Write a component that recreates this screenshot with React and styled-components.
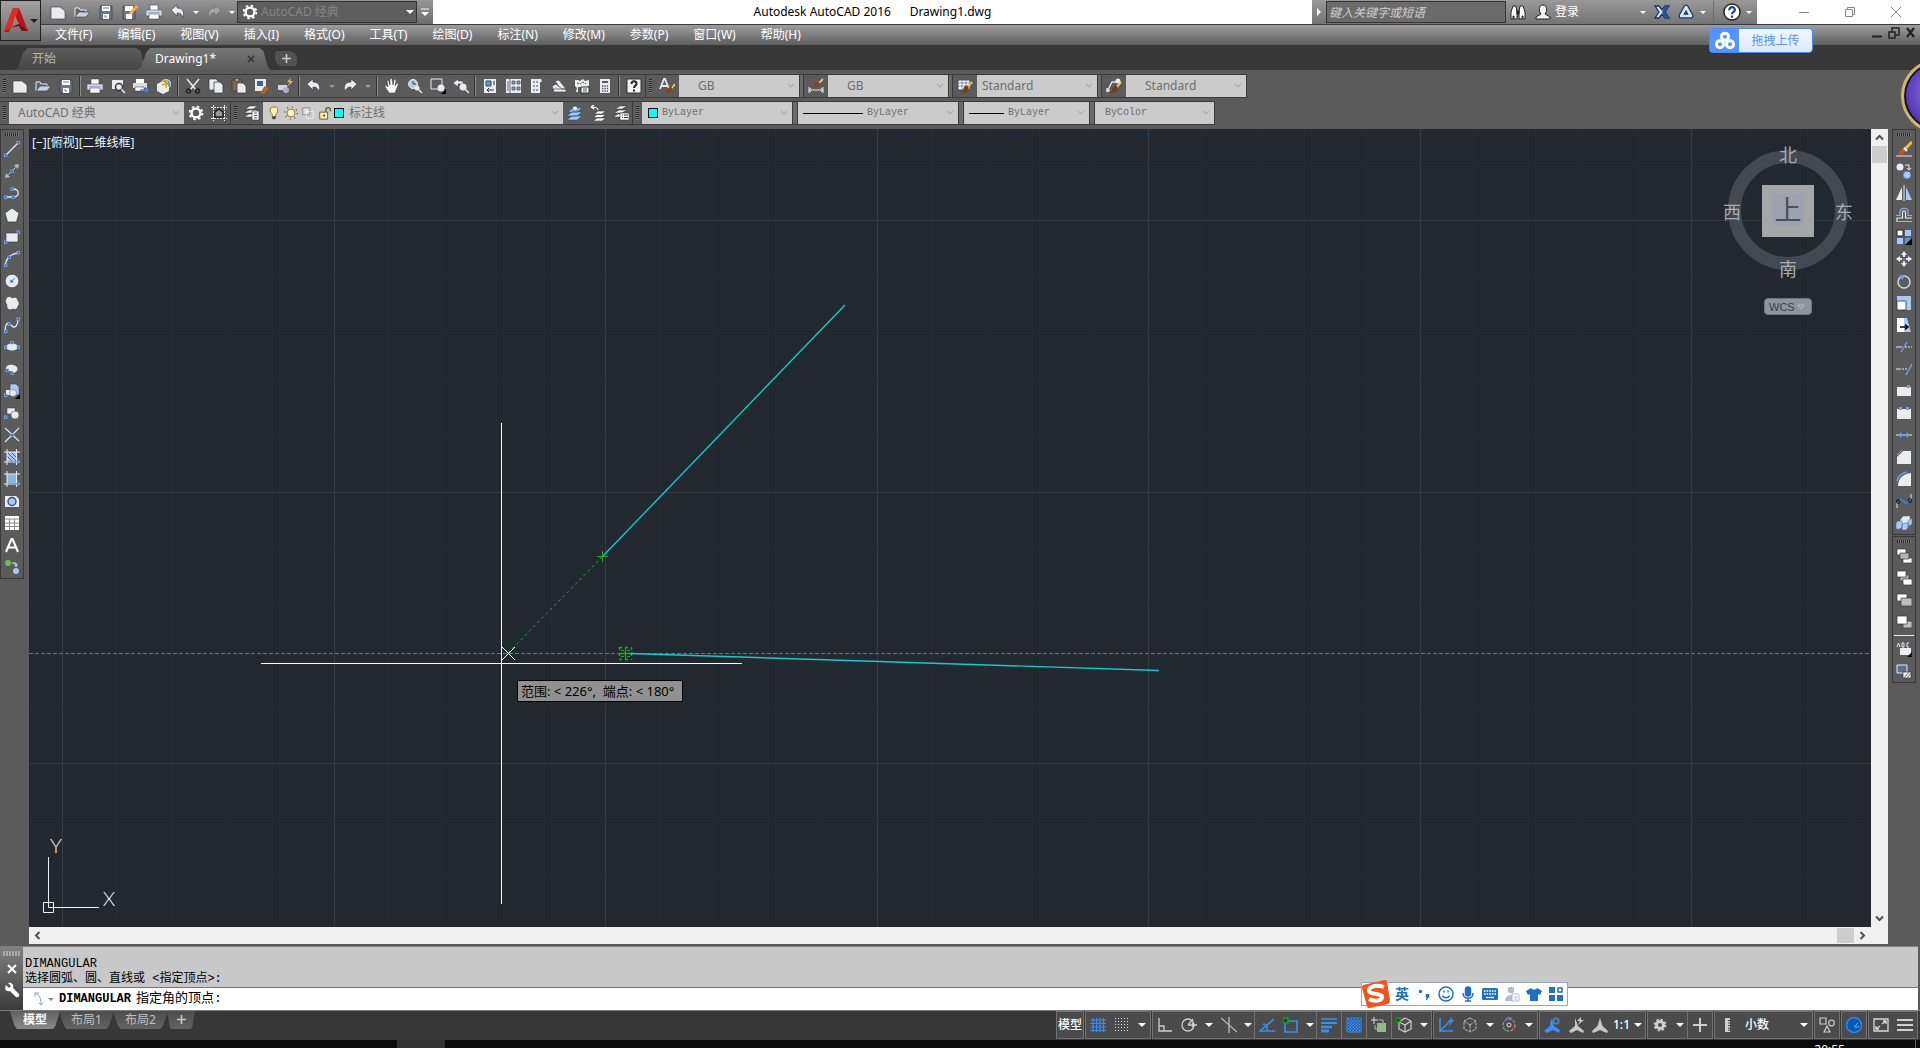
import React, { useState } from "react";
import styled, { createGlobalStyle, css } from "styled-components";

const GlobalStyle = createGlobalStyle`
  * {
    box-sizing: border-box;
  }
  body {
    margin: 0;
    background: #5b5b5b;
    font-family: "Noto Sans", "Noto Sans CJK SC", sans-serif;
    font-size: 12px;
    line-height: 16px;
  }
  button, input, select {
    font: inherit;
    color: inherit;
    margin: 0;
    padding: 0;
    border: none;
    background: none;
    outline: none;
  }
`;

/* ---------- icons ---------- */

const L = "#e9ebef";
const B = "#a9c8f5";
const D = "#333";

const sheet = <path d="M1 3h9l5 4v8H1z" fill={L} stroke={D} strokeWidth=".6" />;
const node = (x, y) => (
  <rect key={`${x}-${y}`} x={x - 1} y={y - 1} width="2.4" height="2.4" fill="#2c4a80" stroke="#7fb0f5" strokeWidth=".9" />
);
const brush = (
  <g>
    <path d="M15 4l-5 6" stroke="#f3c05a" strokeWidth="2" />
    <path d="M11 8c-3-1-5 1-5 5-1 1-2 1-3 1 3 2 8 1 9-3z" fill="#7a3e14" />
  </g>
);

const ICONS = {
  new: sheet,
  open: (
    <g stroke={D} strokeWidth=".6">
      <path d="M1 13V4h4l1 2h6v3" fill="#5d6570" stroke={L} strokeWidth="1" />
      <path d="M1 13l4-5h11l-4 5z" fill="#c6d2e2" />
    </g>
  ),
  save: (
    <g>
      <path d="M2 2h12v13H2z" fill="#6c7686" stroke={D} strokeWidth=".6" />
      <path d="M4 2h8v5H4zM5 10h6v5H5z" fill="#fff" />
      <path d="M5 4h6M6 12h2v2" stroke="#6c7686" fill="none" />
    </g>
  ),
  saveAs: (
    <g>
      <path d="M1 2h12v13H1z" fill="#6c7686" stroke={D} strokeWidth=".6" />
      <path d="M3 2h8v5H3zM4 10h6v5H4z" fill="#fff" />
      <path d="M15 2L8 10" stroke="#f0b040" strokeWidth="3" />
      <path d="M9 8l-2 4 3-2z" fill="#f7dca0" />
    </g>
  ),
  print: (
    <g stroke={D} strokeWidth=".5">
      <path d="M4 1h8v6H4z" fill="#fff" />
      <path d="M0 6h16v6H0z" fill="#d9dce2" />
      <path d="M2 8.500h12" stroke="#4d88d6" />
      <path d="M3 10h10v5H3z" fill="#fff" />
    </g>
  ),
  undo: <path d="M1 6l6-5v3c5 0 8 3 6 10-1-4-3-5-6-5v3z" fill={L} stroke={D} strokeWidth=".6" />,
  redo: <path d="M15 6L9 1v3C4 4 1 7 3 14c1-4 3-5 6-5v3z" fill={L} stroke={D} strokeWidth=".6" />,
  redoDim: <path d="M15 6L9 1v3C4 4 1 7 3 14c1-4 3-5 6-5v3z" fill="#a4a4a4" stroke="#666" strokeWidth=".6" />,
  gear: (
    <g fill="none" stroke="#fff">
      <circle cx="8" cy="8" r="4.400" strokeWidth="2.400" />
      <circle cx="8" cy="8" r="6.400" strokeWidth="1.800" strokeDasharray="2.500 2.526" />
    </g>
  ),
  gearDim: (
    <g fill="none" stroke="#cfcfcf">
      <circle cx="8" cy="8" r="3.500" strokeWidth="3" />
      <circle cx="8" cy="8" r="5.500" strokeWidth="1.800" strokeDasharray="2.200 2.120" />
    </g>
  ),
  preview: (
    <g>
      <path d="M2 2h11v9H2z" fill={L} />
      <circle cx="9" cy="9" r="3.500" fill="#eee" stroke={D} strokeWidth="1.400" />
      <path d="M11.500 11.500L15 15" stroke={L} strokeWidth="1.600" />
    </g>
  ),
  publish: (
    <g>
      <path d="M3 1h8v4H3z" fill="#fff" />
      <path d="M0 5h14v5H0z" fill="#d9dce2" />
      <path d="M2 9h9v4H2z" fill="#fff" stroke={D} strokeWidth=".5" />
      <path d="M7 12h7M12 9.500l3 2.500-3 2.500" stroke="#4a80e0" strokeWidth="1.500" fill="none" />
    </g>
  ),
  globe: (
    <g>
      <path d="M1 6l6-3 6 3v7l-6 3-6-3z" fill={L} />
      <circle cx="10" cy="6" r="5" fill="#f4f0d0" />
      <path d="M7 4c2-3 4-2 5-1M6 7c3-2 5 0 4 3" stroke="#e39b2a" strokeWidth="1.600" fill="none" />
      <path d="M9 3c1 3 4 3 5 6" stroke="#47a55a" strokeWidth="1.500" fill="none" />
      <path d="M12 3l2 4" stroke="#4a80d0" strokeWidth="1.500" />
    </g>
  ),
  cut: (
    <g stroke={L} fill="none" strokeWidth="1.500">
      <path d="M2 1l9 11M14 1L5 12" />
      <circle cx="3.500" cy="13" r="2" stroke="#222" />
      <circle cx="12.500" cy="13" r="2" stroke="#222" />
    </g>
  ),
  copy: (
    <g stroke={D} strokeWidth=".7" fill={L}>
      <path d="M1 1h7l2 2v9H1z" />
      <path d="M6 4h6l3 3v8H6z" />
    </g>
  ),
  paste: (
    <g stroke={D} strokeWidth=".7">
      <path d="M1 2h10v11H1z" fill="#80684c" />
      <path d="M4 1h4v2H4z" fill="#ddd" />
      <path d="M6 5h6l3 3v7H6z" fill={L} />
    </g>
  ),
  match: (
    <g>
      <path d="M1 1h11v12H1z" fill={L} />
      <path d="M3 3h6v5H3z" fill="#3465a8" />
      <path d="M11 8l4 2-5 6-5-1c3-1 3-4 6-7z" fill="#b8621e" />
    </g>
  ),
  blockEdit: (
    <g>
      <path d="M1 7h9v5H1z" fill="#cfd6e2" />
      <circle cx="9" cy="12" r="3" fill="#a9b2c2" />
      <path d="M14 0l-4 4h3l-3 5 6-6h-3z" fill="#ffc23a" />
    </g>
  ),
  hand: (
    <path
      d="M5 15c-1-3-4-5-4-7 1-1 2 0 3 1L3 3c1-1 2 0 2 1l1 3V1c1-1 2-1 2 0l1 6 1-5c1-1 2 0 2 1l-1 5 2-3c1 0 2 1 1 2l-3 8z"
      fill="#fff"
      stroke={D}
      strokeWidth=".5"
    />
  ),
  zoomTime: (
    <g>
      <circle cx="6" cy="6" r="4.500" fill="#b9c7d8" stroke={L} />
      <path d="M6 3v3h3" stroke="#2d4a78" fill="none" />
      <circle cx="10" cy="10" r="2.500" fill={L} />
      <path d="M11 11l4 4" stroke={L} strokeWidth="1.500" />
    </g>
  ),
  zoomWin: (
    <g>
      <path d="M1 1h11v10H1z" fill="none" stroke={L} />
      <circle cx="11" cy="10" r="3.500" fill={L} />
      <path d="M16 11v5h-5z" fill="#000" />
    </g>
  ),
  zoomPrev: (
    <g>
      <path d="M0 5l5-4v2h5v3H5v3z" fill={L} stroke={D} strokeWidth=".5" />
      <circle cx="10" cy="9" r="3.500" fill={L} />
      <path d="M12 11l4 4" stroke={L} strokeWidth="1.500" />
    </g>
  ),
  props: (
    <g>
      <path d="M2 1h12v14H2z" fill={L} />
      <path d="M4 3h5v5H4z" fill="#6a93cf" stroke="#2d4a78" />
      <path d="M11 4h2M11 6h2M5 12h7M5 12l2-2M5 12l2 2" stroke={D} fill="none" />
    </g>
  ),
  center: (
    <g>
      <path d="M1 1h15v14H1z" fill={L} />
      <path d="M5 1v14M3 3v10" stroke="#667" />
      <path d="M7 3h3v3H7zM12 3h3v3h-3zM7 9h3v3H7zM12 9h3v3h-3z" fill="#8aa0bd" stroke="#445" strokeWidth=".7" />
    </g>
  ),
  palettes: (
    <g>
      <path d="M3 1h10l1 3h-2v11H3z" fill={L} />
      <path d="M5 3h2v2H5zM8 3h2v2H8zM5 7h2v2H5zM8 7h2v2H8zM5 11h2v2H5zM8 11h2v2H8z" fill="#99a" />
    </g>
  ),
  sheets: (
    <g fill={L} stroke={D} strokeWidth=".6">
      <path d="M4 3l4-1 7 9-4 2z" />
      <path d="M1 8l4-2 6 5h4v3H3z" />
      <path d="M2 11h12" />
    </g>
  ),
  markup: (
    <g>
      <path d="M1 2h3l2 1 3-2 2 2 4-1v6l-3 1H4v5H2l1-4-2-2z" fill={L} />
      <path d="M3 5l3 1 3-2 3 2" stroke="#555" fill="none" strokeDasharray="2 1" />
      <path d="M7 9h8v6H7z" fill="#fff" stroke={D} />
      <path d="M9 11h4M9 13h4" stroke="#556" />
    </g>
  ),
  calc: (
    <g>
      <path d="M3 1h10v14H3z" fill={L} />
      <path d="M5 3h6v2H5z" fill="#556" />
      <path d="M5 8h6M5 10.500h6M5 13h6" stroke="#556" strokeWidth="1.400" strokeDasharray="1.400 1" />
    </g>
  ),
  help: (
    <g>
      <path d="M1 1h14v14H1z" fill="#f3f3f3" stroke={D} />
      <path d="M5.500 6c0-4 5.500-3.500 5 0-.5 2-2.500 1.500-2.500 4M8 11.500v2" stroke="#222" strokeWidth="2" fill="none" />
    </g>
  ),
  textStyle: (
    <g>
      <path d="M1 11L5 1h1l4 10M3 8h5" stroke={L} strokeWidth="1.800" fill="none" />
      <path d="M16 6l-4 5" stroke="#f3e05a" strokeWidth="1.500" />
      <path d="M12 9c-3 0-4 2-5 5 3 2 6 0 6-4z" fill="#8a4216" />
    </g>
  ),
  dimStyle: (
    <g>
      <path d="M1 9v6M15 9v6M1 12h14M3 10l-2 2 2 2M13 10l2 2-2 2" stroke={L} fill="none" />
      <path d="M15 1l-5 5" stroke="#f3c05a" strokeWidth="1.800" />
      <path d="M11 4c-4 0-5 3-6 6 4 1 6-1 7-4z" fill="#8a4216" />
    </g>
  ),
  tableStyle: (
    <g>
      <path d="M1 2h12v10H1z" fill="#fff" stroke="#445" />
      <path d="M1 5h12M1 8h12M5 3v9M9 3v9" stroke="#6a93cf" />
      {brush}
    </g>
  ),
  leaderStyle: (
    <g>
      <path d="M1 14L6 4h4M1 14l3-2M1 14V10" stroke={L} strokeWidth="1.300" fill="none" />
      <circle cx="12" cy="3" r="2.500" fill={L} />
      {brush}
    </g>
  ),
  wsFrame: (
    <g>
      <path d="M0 2.500h16M0 13.500h16M2.500 0v16M13.500 0v16" stroke="#eee" strokeDasharray="2 1" />
      <path d="M4 12V7l4-3 4 3v5z" fill="#9a9a9a" stroke="#1d1d1d" strokeWidth="1.400" />
    </g>
  ),
  layerProps: (
    <g fill="#fff" stroke={D} strokeWidth=".6">
      <path d="M0 12l5-3h9l-5 3zM0 8l5-3h9l-5 3zM1 4l5-3h8l-5 3z" />
      <path d="M8 6h7v9H8z" />
      <path d="M10 8h3M10 10.500h3M10 13h3" stroke="#3465a8" strokeWidth="1" />
    </g>
  ),
  layerCur: (
    <g fill="#dfe9f7" stroke="#2d4a78" strokeWidth=".6">
      <path d="M0 15l5-4h10l-5 4zM0 11l5-4h10l-5 4zM1 7l5-4h9l-5 4z" fill={B} />
      <circle cx="8" cy="3.500" r="2.500" />
    </g>
  ),
  layerPrev: (
    <g fill="#fff" stroke={D} strokeWidth=".6">
      <path d="M3 16l4-3h9l-4 3zM3 12.500l4-3h9l-4 3zM4 9l4-3h8l-4 3z" />
      <path d="M8 5c0-2-3-3-7-3M1 2l3-2M1 2l3 2" stroke="#fff" strokeWidth="1.200" fill="none" />
    </g>
  ),
  layerState: (
    <g fill="#fff" stroke={D} strokeWidth=".6">
      <path d="M0 12l5-3h9l-5 3zM1 8l5-3h8l-5 3zM2 4l5-3h7l-5 3z" />
      <path d="M7 8h9v7H7z" />
      <path d="M9 10h1M11 10h4M9 12.500h1M11 12.500h4" stroke={D} strokeWidth="1" />
    </g>
  ),
  bulb: (
    <g>
      <path d="M8 1c6 0 5 6 2 9v2H6v-2C3 7 2 1 8 1z" fill="#fff3a0" stroke="#6d6216" strokeWidth=".9" />
      <path d="M6 12h4v3H6z" fill="#445" />
    </g>
  ),
  sun: (
    <g>
      <circle cx="8" cy="8" r="7" fill="none" stroke="#6d5a20" strokeWidth="1.500" strokeDasharray="1.300 4.200" />
      <circle cx="8" cy="8" r="4.500" fill="#fff3c0" stroke="#8d6a20" />
    </g>
  ),
  freezeVp: (
    <g>
      <path d="M2 2h8v8H2z" fill="#ddd" stroke="#888" />
      <path d="M6 6h8v8H6z" fill="none" stroke="#fff" strokeDasharray="2 1" />
    </g>
  ),
  unlock: (
    <g>
      <path d="M9 7V4c0-3 5-3 5 0v2" fill="none" stroke="#5d5320" strokeWidth="1.500" />
      <path d="M2 7h9v8H2z" fill="#fff0a8" stroke="#5d5320" />
      <path d="M6 10h2v2H6z" fill="#333" />
    </g>
  ),
  binoc: (
    <g fill="#fff" stroke="#222" strokeWidth="1">
      <path d="M1 15V8l2-6h3l1 6v7H4v-3H3v3zM15 15V8l-2-6h-3L9 8v7h3v-3h1v3z" />
      <path d="M7 7h2v3H7z" fill="#222" />
    </g>
  ),
  user: (
    <g fill="#f2f2f2" stroke="#222" strokeWidth="1">
      <path d="M8 1c5 0 4 7 2 9l5 3v2H1v-2l5-3C4 8 3 1 8 1z" />
    </g>
  ),
  exchange: (
    <g>
      <path d="M1 2h4l3 4 3-4h4l-4 6 4 6h-4l-3-4-3 4H1l4-6z" fill="#dbe6fb" stroke="#1c3261" strokeWidth="1.300" />
      <path d="M11 2h4l-4 6 4 6h-4L8 8z" fill="#2d4f94" />
    </g>
  ),
  a360: (
    <g fill="none">
      <path d="M8 3l5 9H3z" stroke="#1c3261" strokeWidth="5" strokeLinejoin="round" />
      <path d="M8 3l5 9H3z" stroke="#dbe6fb" strokeWidth="2.600" strokeLinejoin="round" />
    </g>
  ),
  helpRound: (
    <g>
      <circle cx="8" cy="8" r="7.200" fill="#fff" stroke="#222" strokeWidth="1.300" />
      <path d="M5.500 6.500c0-4 5.500-3.500 5 0-.5 1.500-2.500 1.500-2.500 3.500M8 11v2" stroke="#27488c" strokeWidth="2" fill="none" />
    </g>
  ),
  cloud: (
    <g fill="none" stroke="#fff" strokeWidth="2.400">
      <circle cx="8" cy="4.500" r="2.800" />
      <circle cx="4" cy="10.500" r="2.800" />
      <circle cx="12" cy="10.500" r="2.800" />
    </g>
  ),
  wrench: (
    <path d="M2 3l3 3 2-2-3-3c4-1 6 2 5 5l6 6c1 2-1 4-3 3L6 9C2 10 0 7 2 3z" fill="#fff" />
  ),

  /* draw toolbar */
  line: <g><path d="M2 14L14 2" stroke={L} strokeWidth="1.300" />{node(1.5, 14)}{node(14, 1.5)}</g>,
  xline: (
    <g>
      <path d="M3 13L13 3" stroke={L} strokeDasharray="2 1" />
      <path d="M15 1l-5 1 4 4zM1 15l1-5 4 4z" fill="#bbb" />
      {node(8, 8)}
    </g>
  ),
  pline: <g><path d="M1 12h8c7 0 7-8 0-8" stroke={L} fill="none" strokeWidth="1.300" />{node(1.5, 12)}{node(9, 12)}{node(8, 4)}</g>,
  polygon: <path d="M8 1l7 5-2.500 9h-9L1 6z" fill={L} stroke={D} strokeWidth=".7" />,
  rect: <g><path d="M2 4h12v9H2z" fill={L} stroke={D} strokeWidth=".6" />{node(1.5, 13)}{node(14, 3)}</g>,
  arc: <g><path d="M1 15C2 8 6 3 14 2" stroke={L} fill="none" strokeWidth="1.300" />{node(1.5, 14)}{node(5, 6)}{node(14, 1.5)}</g>,
  circle: <g><circle cx="8" cy="8" r="6.800" fill={L} stroke={D} strokeWidth=".6" /><path d="M8 8l3-3" stroke="#4d88d6" />{node(7.5, 8)}</g>,
  revcloud: <path d="M2 4c1-3 5-3 6-1 3-2 6 0 6 3 2 2 1 4 0 5 0 3-3 4-5 3-3 2-7 0-6-4-2-2-2-5-1-6z" fill={L} stroke={D} strokeWidth=".6" />,
  spline: <g><path d="M1 14c1-13 6-6 7-5 3 3 6-1 6-7" stroke={L} fill="none" strokeWidth="1.300" />{node(1.5, 14)}{node(5, 7)}{node(14, 2)}</g>,
  ellipse: <g><ellipse cx="8" cy="8" rx="6" ry="3.500" fill={L} />{node(1.5, 8)}{node(14, 8)}{node(8, 3.5)}</g>,
  ellArc: <g><path d="M3 10C0 6 4 3 9 4c6 1 6 7 0 8l-1-2z" fill={L} />{node(3, 9)}{node(8, 12)}</g>,
  insert: (
    <g>
      <path d="M6 1h6l3 3v8H6z" fill={B} stroke={D} strokeWidth=".5" />
      <path d="M2 7h7v5H2z" fill={L} />
      <circle cx="9" cy="10" r="3.500" fill={L} stroke="#667" strokeWidth=".6" />
      <path d="M16 11v5h-5z" fill="#000" />
      {node(1.5, 12)}
    </g>
  ),
  block: (
    <g>
      <path d="M3 3h8v6H3z" fill={L} stroke={D} strokeWidth=".5" />
      <circle cx="11" cy="10" r="4" fill={L} stroke="#667" strokeWidth=".7" />
      {node(1.5, 12)}
    </g>
  ),
  point: <g><path d="M1 1l14 13M15 1L1 15" stroke={L} strokeWidth="1.100" />{node(8, 8)}</g>,
  hatch: (
    <g>
      <path d="M3 3h9v9H3z" fill={B} />
      <path d="M4 4l8 8M7 3l5 5M3 7l5 5" stroke="#3465a8" />
      <path d="M0 3h16M0 13h16M3 0v16M12.500 0v16" stroke={L} />
      <path d="M10 15l6-5M14 9v6" stroke="#4d88d6" />
    </g>
  ),
  gradient: (
    <g>
      <path d="M3 3h9v9H3z" fill="#8fb2e4" />
      <path d="M0 3h16M0 13h16M3 0v16M12.500 0v16" stroke={L} />
      <path d="M10 15l6-5M14 9v6" stroke="#4d88d6" />
    </g>
  ),
  region: <g><path d="M1 3h11l3 3v8H1z" fill={L} /><circle cx="8" cy="8.500" r="4" fill={B} stroke="#27488c" strokeWidth="1.300" /></g>,
  table: <g><path d="M1 1h14v14H1z" fill="#fff" /><path d="M1 4h14M1 8h14M1 11.500h14M5.500 4v11M10.500 4v11" stroke="#8a8a8a" /></g>,
  mtext: <path d="M2 15L7.500 2h1L14 15M4 10.500h8" stroke="#fff" strokeWidth="2.200" fill="none" />,
  addSel: (
    <g>
      <circle cx="4" cy="4" r="3" fill="#6cc04a" />
      <circle cx="12" cy="12" r="3" fill={B} />
      <path d="M8 4h4v3M10.500 5.500L12 7.500l1.500-2" stroke={L} fill="none" />
    </g>
  ),

  /* modify toolbar */
  erase: (
    <g>
      <path d="M0 15h16" stroke={L} />
      <path d="M16 1l-8 8" stroke="#f3b93a" strokeWidth="3" />
      <path d="M8 7l3 3" stroke="#fff" strokeWidth="2" />
      <path d="M7 8c-4 1-4 4-4 6 4 0 6-1 6-4z" fill="#c8501a" />
    </g>
  ),
  copyObj: (
    <g>
      <circle cx="4" cy="4" r="3.500" fill={L} />
      <circle cx="11" cy="12" r="3.800" fill={B} stroke="#4d72b0" strokeWidth=".6" />
      <path d="M9 2h4v4M11 5l2 2 2-2" stroke={L} fill="none" />
    </g>
  ),
  mirror: <g><path d="M6 2v13H0z" fill={L} /><path d="M10 2v13h6z" fill={B} /><path d="M8 0v16" stroke={L} /></g>,
  offset: (
    <g fill="none">
      <path d="M0 14.500h16M0 8.500h4V5c0-5 8-5 8 0v3.500h4" stroke="#8fb2e4" strokeWidth="1.200" />
      <path d="M1 14V11h5.500V6c0-3 3-3 3 0v5H16" stroke={L} strokeWidth="1.200" />
    </g>
  ),
  array: (
    <g>
      <path d="M1 1h6v6H1z" fill="#fff" stroke="#222" />
      <path d="M9 1h6v6H9zM1 9h6v6H1z" fill={B} />
      <path d="M9 9h6v6H9z" fill="#6a93cf" />
      <path d="M16 9v7H9z" fill="#000" />
    </g>
  ),
  move: (
    <g fill={L}>
      <path d="M8 0l3 4H9v2H7V4H5zM8 16l3-4H9v-2H7v2H5zM0 8l4-3v2h2v2H4v2zM16 8l-4-3v2h-2v2h2v2z" />
      <path d="M7 7h2v2H7z" fill="#4d88d6" />
    </g>
  ),
  rotate: <g><circle cx="8" cy="9" r="6" fill="none" stroke="#d5d5d5" strokeWidth="1.500" /><path d="M3 2l6 1-3 4z" fill="#6ba0f0" /></g>,
  scale: <g><path d="M1 1h14v14H1z" fill={B} /><path d="M1 6h9v9H1z" fill="#fff" stroke={D} strokeWidth=".8" /></g>,
  stretch: <g><path d="M1 1h7v14H1z" fill="#fff" /><path d="M8 1h3l4 14H8z" fill={B} /><path d="M4 10h7M9 7.500l3 2.500-3 2.500" stroke="#000" strokeWidth="1.500" fill="none" /></g>,
  trim: <g><path d="M0 8h6" stroke={L} /><path d="M9 8h7" stroke={L} strokeDasharray="2 1" /><path d="M5 13l6-10" stroke="#6ba0f0" strokeWidth="1.400" /></g>,
  extend: <g><path d="M0 8h5" stroke={L} /><path d="M6 8h5" stroke={L} strokeDasharray="2 1" /><path d="M10 14l6-11" stroke="#6ba0f0" strokeWidth="1.400" /></g>,
  breakPt: <g><path d="M1 4h14v9H1z" fill={L} /><path d="M11 2h3v3h-3z" fill="#6ba0f0" /></g>,
  breakSeg: <g><path d="M1 4h14v10H1z" fill={L} /><path d="M3 2h3v3H3zM10 2h3v3h-3z" fill="#6ba0f0" /></g>,
  join: <g><path d="M0 8h16" stroke={L} /><path d="M4 5l3 3-3 3zM12 5L9 8l3 3z" fill="#6ba0f0" /><path d="M5 8h6" stroke="#6ba0f0" strokeWidth="2" /></g>,
  chamfer: <g><path d="M7 2h8v13H1V8z" fill={L} /><path d="M1 6l5-5" stroke="#6ba0f0" /></g>,
  fillet: <g><path d="M15 2v13H2C2 8 6 3 15 2z" fill={L} /><path d="M1 10C2 5 5 2 11 1" stroke="#6ba0f0" fill="none" strokeWidth="1.600" /></g>,
  blend: (
    <g fill="none">
      <path d="M1 15V9M15 7V1" stroke={L} />
      <path d="M3 8c4-5 5 6 10 0" stroke="#3f7fd6" strokeWidth="2" />
      <circle cx="2" cy="8.500" r="1.800" stroke="#111" />
      <circle cx="14" cy="7.500" r="1.800" stroke="#111" />
    </g>
  ),
  explode: (
    <g stroke="#4d5f7d" strokeWidth=".5">
      <path d="M4 5l3-4h7v5l-3 3H4z" fill={L} />
      <path d="M0 8l2-2h4v6l-2 2H0zM6 10l2-2h4v5l-2 2H6zM12 6l4-3v6l-4 3z" fill={B} />
    </g>
  ),

  /* draw order toolbar */
  front: <g stroke={D} strokeWidth=".7"><path d="M1 1h9v6H1zM7 10h9v5H7z" fill="#fff" /><path d="M4 5h9v6H4z" fill="#b5b5b5" /></g>,
  back: <g stroke={D} strokeWidth=".7"><path d="M4 5h9v6H4z" fill="#b5b5b5" /><path d="M1 1h9v6H1zM7 9h9v6H7z" fill="#fff" /></g>,
  above: <g stroke={D} strokeWidth=".7"><path d="M1 2h10v7H1z" fill="#fff" /><path d="M5 6h11v8H5z" fill="#bdbdbd" /></g>,
  below: <g stroke={D} strokeWidth=".7"><path d="M7 7h9v7H7z" fill="#bdbdbd" /><path d="M1 2h10v8H1z" fill="#fff" /></g>,
  annoFront: (
    <g>
      <path d="M4 7h11v7H4z" fill={L} />
      <path d="M1 6l1.500-4L4 6M6 2v4h2V2zM13 2h-2v4h2" stroke={L} fill="none" />
      <path d="M16 11v5h-5z" fill="#000" />
    </g>
  ),
  hatchBack: (
    <g>
      <path d="M1 2h10v8H1z" fill="#5c6f8a" stroke={L} />
      <path d="M7 9h8v6H7z" fill={L} stroke={D} strokeWidth=".6" />
      <path d="M8 15l5-6M11 15l4-5" stroke="#777" />
    </g>
  ),

  /* status bar */
  grid: <path d="M3 1v14M6.500 1v14M10 1v14M13.500 1v14M0 3h16M0 6.500h16M0 10h16M0 13.500h16" stroke="#3b8ef3" strokeWidth="1.200" />,
  snap: (
    <g stroke="#e0e0e0" strokeDasharray="1 2">
      <path d="M1 1.500h14M1 4.500h14M1 7.500h14M1 10.500h14M1 13.500h14" />
    </g>
  ),
  ortho: <path d="M2 1v13h13M2 9h5v5" stroke="#cfcfcf" fill="none" strokeWidth="1.300" />,
  polar: <g stroke="#cfcfcf" fill="none" strokeWidth="1.300"><circle cx="7" cy="8" r="6" /><path d="M7 8h9M7 8l5-6M11 6l2 2-2 2" /></g>,
  iso: <g stroke="#bdbdbd" fill="none"><path d="M8 0v16M0 1l16 14" strokeWidth="1.300" /></g>,
  otrack: <g stroke="#3b8ef3" fill="none" strokeWidth="1.500"><path d="M15 2L1 14h15" /><path d="M4 7l4 1v5" /></g>,
  osnap: <g fill="none"><path d="M2 4h12v11H2z" stroke="#3b8ef3" strokeWidth="1.600" /><path d="M0 1h5v5H0z" fill="#143" stroke="#14a514" strokeWidth="1.500" /></g>,
  lwt: <g stroke="#3b8ef3"><path d="M0 2h16" strokeWidth="1.500" /><path d="M0 6h16" strokeWidth="2" /><path d="M0 10h11" strokeWidth="2.500" /><path d="M0 14h8" strokeWidth="3" /></g>,
  transp: (
    <g>
      <path d="M1 1h14v14H1z" fill="#20508a" stroke="#3b8ef3" />
      <path d="M2 3h12M2 6h12M2 9h12M2 12h12" stroke="#4b9bff" strokeDasharray="1.500 1.500" strokeWidth="1.500" />
      <path d="M3.500 4.500h11M3.500 7.500h11M3.500 10.500h11M3.500 13.500h11" stroke="#4b9bff" strokeDasharray="1.500 1.500" strokeWidth="1.500" />
    </g>
  ),
  cycle: <g><path d="M6 6h9v9H6z" fill="#8fbf7c" /><path d="M3 0v7M0 3h7" stroke="#ddd" /><path d="M4 8v4h2M8 3h4v3" stroke="#bbb" fill="none" /></g>,
  osnap3d: (
    <g fill="none">
      <path d="M9 1l6 3v8l-6 3-6-3V5l6-4M9 8l6-4M9 8v7M9 8L3 5" stroke="#cfcfcf" strokeWidth="1.200" />
      <path d="M0 1h4v4H0z" fill="#143" stroke="#14a514" strokeWidth="1.300" />
    </g>
  ),
  ducs: <g stroke="#3b8ef3" fill="none" strokeWidth="1.600"><path d="M2 1v13h13M2 14l9-9" /><path d="M14 0l-4 5h3l-2 4 5-6h-3z" fill="#3b8ef3" strokeWidth=".5" /></g>,
  filter: <path d="M8 1l6 3v8l-6 3-6-3V4zM8 8l6-4M8 8v7M8 8L2 4" stroke="#b9b9b9" fill="none" strokeDasharray="3 1" />,
  gizmo: (
    <g fill="none">
      <circle cx="8" cy="8" r="6" stroke="#bbb" strokeDasharray="3 1.500" />
      <circle cx="8" cy="8" r="2" stroke="#ddd" />
      <path d="M2 11l3 3" stroke="#2da32d" strokeWidth="1.500" />
      <path d="M11 11h4" stroke="#c33" strokeWidth="1.500" />
      <path d="M5 2l3-2 3 2" stroke="#5a86f0" strokeWidth="1.500" />
    </g>
  ),
  annoVis: <g><path d="M7 1l3 8 6 4-1 3-6-3-6 3-3-2 6-5z" fill="#3b8ef3" /><circle cx="12" cy="4" r="2.700" fill="#4b4b4b" stroke="#3b8ef3" strokeWidth="1.600" /></g>,
  annoAuto: <g><path d="M7 1l3 8 6 5-1 2-6-3-6 3-2-2 6-5z" fill="#c9c9c9" /><path d="M13 0l-4 4h3l-2 4 6-5h-3z" fill="#c9c9c9" /></g>,
  annoScale: <path d="M8 1l2.500 8 5.500 5-1 2-7-3-7 3-1-2 5.500-5z" fill="#c9c9c9" />,
  plus: <path d="M8 1v14M1 8h14" stroke="#cfcfcf" strokeWidth="2" />,
  ruler: <g><path d="M6 1h5v14H6z" fill="#cfcfcf" /><path d="M9 3.500h2M9 6h2M9 8.500h2M9 11h2M9 13h2" stroke="#444" /></g>,
  isolate: <g fill="none" stroke="#cfcfcf" strokeWidth="1.200"><path d="M1 1h6v6H1zM8 9l3 6H5z" /><circle cx="12.500" cy="6" r="2.800" /></g>,
  perf: <g><circle cx="8" cy="8" r="7.500" fill="#0a58b5" stroke="#2f8bf0" strokeWidth="1.300" /><path d="M8 10l4-4M9 11l4-2" stroke="#74b6ff" /></g>,
  clean: <g fill="none" stroke="#d8d8d8" strokeWidth="1.300"><path d="M1 2h14v12H1z" /><path d="M9 7l4-3M10 4h3v3M7 9l-4 3M3 9v3h3" /></g>,
  burger: <path d="M0 3h16M0 8h16M0 13h16" stroke="#cfcfcf" strokeWidth="1.800" />,

  /* input method bar */
  punct: <g fill="#1f6fc4"><circle cx="4" cy="5" r="2" /><path d="M10 8h4v3l-3 4h-1l1-3h-1z" /></g>,
  smile: (
    <g fill="none" stroke="#1f6fc4" strokeWidth="1.500">
      <circle cx="8" cy="8" r="7" />
      <path d="M4.500 9.500c1 3 6 3 7 0M6 4.500v2M10 4.500v2" />
    </g>
  ),
  mic: (
    <g fill="none" stroke="#1f6fc4" strokeWidth="1.500">
      <rect x="5.500" y="1" width="5" height="9" rx="2.500" fill="#1f6fc4" />
      <path d="M3 7c0 7 10 7 10 0M8 12v3M5 15h6" />
    </g>
  ),
  keyboard: (
    <g>
      <rect x="0" y="2" width="16" height="12" rx="1.500" fill="#1f6fc4" />
      <path d="M2 5h12M2 8h12" stroke="#fff" strokeWidth="1.500" strokeDasharray="1.600 1" />
      <path d="M4 11.500h8" stroke="#fff" strokeWidth="1.300" />
    </g>
  ),
  person: (
    <g fill="#b3bccb">
      <circle cx="7" cy="4" r="3.300" />
      <path d="M1 15c0-8 12-8 12 0z" />
      <path d="M8 8h7v7H8z" fill="#fff" stroke="#b3bccb" />
      <path d="M10 11h4M10 13h3" stroke="#b3bccb" />
    </g>
  ),
  shirt: <path d="M5 2c1 2 5 2 6 0l5 3-2 4-2-1v7H4V8L2 9 0 5z" fill="#1f6fc4" />,
  apps: <g fill="#1f6fc4"><path d="M1 1h6v6H1zM1 9h6v6H1zM9 9h6v6H9z" /><path d="M10 2h4v4h-4z" fill="none" stroke="#1f6fc4" strokeWidth="1.500" /></g>,
};

const IconSvg = styled.svg`
  display: block;
  flex: none;
  width: ${(p) => p.$size || 16}px;
  height: ${(p) => p.$size || 16}px;
`;

const Icon = ({ name, size }) => (
  <IconSvg viewBox="0 0 16 16" $size={size} aria-hidden="true">
    {ICONS[name]}
  </IconSvg>
);

/* ---------- shared parts ---------- */

const Page = styled.div`
  display: flex;
  flex-direction: column;
  height: 100vh;
  overflow: hidden;
  background: #5b5b5b;
`;

const IconButton = styled.button`
  display: flex;
  flex: none;
  align-items: center;
  justify-content: center;
  width: ${(p) => p.$w || 23}px;
  height: 22px;
`;

const Caret = styled.span`
  display: block;
  width: 0;
  height: 0;
  border: ${(p) => p.$size || 3}px solid transparent;
  border-top-color: ${(p) => p.$color || "#fff"};
  border-bottom: none;
`;

const CaretButton = ({ w, color, size, label }) => (
  <IconButton $w={w} aria-label={label || "下拉"}>
    <Caret $color={color} $size={size} />
  </IconButton>
);

const ToolButton = ({ name, w, size }) => (
  <IconButton $w={w} aria-label={name}>
    <Icon name={name} size={size} />
  </IconButton>
);

/* ---------- header ---------- */

const Header = styled.header`
  display: grid;
  flex: none;
  grid-template-columns: 41px 1fr;
  grid-template-rows: 25px 20px;
`;

const AppButton = styled.button`
  grid-row: 1 / 3;
  display: flex;
  align-items: center;
  gap: 2px;
  height: 41px;
  padding-left: 3px;
  border: 1px solid #222;
  background: linear-gradient(#a2a2a2, #6b6b6b);
`;

const TitleBar = styled.div`
  display: flex;
  background: #fff;
  border-bottom: 1px solid #3b3b3b;
`;

const QuickAccess = styled.div`
  display: flex;
  align-items: center;
  padding-left: 5px;
  background: linear-gradient(#959595, #6d6d6d);
`;

const WorkspaceBox = styled.label`
  display: flex;
  align-items: center;
  gap: 3px;
  width: 180px;
  height: 22px;
  padding: 0 2px 0 4px;
  border: 1px solid #333;
  background: #5e5e5e;
  color: #858585;
`;

const PlainSelect = styled.select`
  appearance: none;
  flex: 1;
  min-width: 0;
  height: 18px;
`;

const Title = styled.h1`
  flex: 1;
  margin: 0;
  font-size: 12px;
  font-weight: 400;
  line-height: 24px;
  text-align: center;
  white-space: pre;
  color: #000;
`;

const InfoCenter = styled.div`
  display: flex;
  align-items: center;
  width: 445px;
  background: linear-gradient(#989898, #747474);
  color: #fff;
`;

const ExpandButton = styled.button`
  width: 14px;
  height: 24px;
  padding-left: 5px;

  span {
    display: block;
    width: 0;
    height: 0;
    border: 4px solid transparent;
    border-left-color: #fff;
    border-right: none;
  }
`;

const SearchInput = styled.input`
  width: 180px;
  height: 22px;
  padding-left: 2px;
  border: 1px solid #333;
  background: #6b6b6b;
  font-style: italic;

  &::placeholder {
    color: #d0d0d0;
    opacity: 1;
  }
`;

const SignIn = styled.button`
  display: flex;
  align-items: center;
  justify-content: space-between;
  width: 95px;
  height: 22px;
  padding-right: 4px;
`;

const ThinLine = styled.span`
  width: 1px;
  height: 22px;
  margin: 0 6px;
  background: #6c6c6c;
`;

const WindowButtons = styled.div`
  display: flex;
  width: 163px;
  padding-left: 24px;
  align-items: center;
`;

const WindowButton = styled.button`
  width: 46px;
  height: 22px;
  display: grid;
  place-items: center;
  flex: none;
`;

const MenuBar = styled.nav`
  display: flex;
  align-items: center;
  gap: 25px;
  padding-left: 14px;
  background: linear-gradient(#9d9d9d, #5f5f5f);
  color: #fff;
`;

const MenuItem = styled.button`
  height: 20px;
  white-space: nowrap;
`;

const DocButtons = styled.div`
  display: flex;
  gap: 5px;
  margin-left: auto;
  padding-right: 3px;
`;

const MENUS = [
  "文件(F)", "编辑(E)", "视图(V)", "插入(I)", "格式(O)", "工具(T)",
  "绘图(D)", "标注(N)", "修改(M)", "参数(P)", "窗口(W)", "帮助(H)",
];

const Logo = () => (
  <svg width="24" height="27" viewBox="0 0 24 27" aria-hidden="true">
    <path d="M9 1h6l9 23h-6l-3-5-8 1-2 5H0z" fill="#b81517" />
    <path d="M9 1h6l-2 7-5 12-8 5z" fill="#df2b25" />
    <path d="M11 9l4 8-7 3z" fill="#8b8b8b" />
    <path d="M24 24l-9-7-8 3 8-1 3 5z" fill="#7d0c10" />
  </svg>
);

const TopHeader = () => (
  <Header>
    <AppButton aria-label="应用程序菜单">
      <Logo />
      <Caret $color="#222" $size={4} />
    </AppButton>
    <TitleBar>
      <QuickAccess>
        {["new", "open", "save", "saveAs", "print", "undo"].map((n) => (
          <ToolButton key={n} name={n} w={24} />
        ))}
        <CaretButton w={12} />
        <ToolButton name="redoDim" w={24} />
        <CaretButton w={11} />
        <WorkspaceBox>
          <Icon name="gear" />
          <PlainSelect aria-label="工作空间">
            <option>AutoCAD 经典</option>
          </PlainSelect>
          <Caret $size={4} />
        </WorkspaceBox>
        <IconButton $w={16} aria-label="自定义快速访问工具栏">
          <svg width="8" height="8" viewBox="0 0 8 8">
            <path d="M0 1h8" stroke="#fff" />
            <path d="M0 4h8L4 8z" fill="#fff" />
          </svg>
        </IconButton>
      </QuickAccess>
      <Title>{"Autodesk AutoCAD 2016      Drawing1.dwg"}</Title>
      <InfoCenter>
        <ExpandButton aria-label="展开"><span /></ExpandButton>
        <SearchInput placeholder="键入关键字或短语" aria-label="搜索" />
        <ToolButton name="binoc" w={24} />
        <ToolButton name="user" w={25} />
        <SignIn>
          登录
          <Caret />
        </SignIn>
        <ToolButton name="exchange" w={24} />
        <ToolButton name="a360" w={24} />
        <CaretButton w={9} />
        <ThinLine />
        <ToolButton name="helpRound" w={24} size={18} />
        <CaretButton w={10} />
      </InfoCenter>
      <WindowButtons>
        <WindowButton aria-label="最小化">
          <svg width="10" height="10"><path d="M0 5.500h10" stroke="#888" /></svg>
        </WindowButton>
        <WindowButton aria-label="还原">
          <svg width="10" height="10"><path d="M.5 2.500h7v7h-7zM2.500 2.500v-2h7v7h-2" stroke="#888" fill="none" /></svg>
        </WindowButton>
        <WindowButton aria-label="关闭">
          <svg width="10" height="10"><path d="M0 0l10 10M10 0L0 10" stroke="#888" /></svg>
        </WindowButton>
      </WindowButtons>
    </TitleBar>
    <MenuBar>
      {MENUS.map((m) => (
        <MenuItem key={m}>{m}</MenuItem>
      ))}
      <DocButtons>
        <button aria-label="最小化图形">
          <svg width="12" height="12"><path d="M1 9.500h10" stroke="#222" strokeWidth="2" /></svg>
        </button>
        <button aria-label="还原图形">
          <svg width="12" height="12"><path d="M1 5h6v6H1zM4 5V1h7v7H7" stroke="#222" strokeWidth="1.500" fill="none" /></svg>
        </button>
        <button aria-label="关闭图形">
          <svg width="12" height="12"><path d="M2 1l7 9M9 1l-7 9" stroke="#222" strokeWidth="2.200" /></svg>
        </button>
      </DocButtons>
    </MenuBar>
  </Header>
);

/* ---------- file tabs ---------- */

const FileTabs = styled.div`
  display: flex;
  flex: none;
  align-items: flex-end;
  height: 25px;
  padding-left: 14px;
  background: #373737;
`;

const FileTab = styled.button`
  display: flex;
  align-items: center;
  justify-content: space-between;
  width: 133px;
  height: 22px;
  padding: 0 15px 0 18px;
  margin-right: -10px;
  text-align: left;
  color: #b5b5b5;
  background: linear-gradient(#5c5c5c, #464646);
  clip-path: polygon(0 100%, 3% 88%, 7% 20%, 10% 0, 92% 0, 95% 12%, 98% 80%, 100% 100%);

  ${(p) =>
    p.$active &&
    css`
      color: #fff;
      background: linear-gradient(#777, #5b5b5b);
    `}
`;

const AddFileTab = styled.button`
  width: 22px;
  height: 15px;
  margin: 0 0 4px 15px;
  border-radius: 3px 8px 3px 8px;
  background: #525252;
  display: grid;
  place-items: center;
`;

const PlusGlyph = () => (
  <svg width="9" height="9" viewBox="0 0 9 9">
    <path d="M4.500 0v9M0 4.500h9" stroke="#c8c8c8" strokeWidth="1.600" />
  </svg>
);

/* ---------- toolbars ---------- */

const Toolbars = styled.div`
  display: flex;
  flex: none;
  flex-direction: column;
  gap: 3px;
  padding: 4px 0;
`;

const ToolbarRow = styled.div`
  display: flex;
  height: 24px;
`;

const Toolbar = styled.div`
  display: flex;
  align-items: center;
  height: 24px;
  border: 1px solid #3a3a3a;
  border-left: none;
`;

const Grip = styled.span`
  flex: none;
  width: ${(p) => p.$w || 8}px;
  height: 14px;
  background: repeating-linear-gradient(#262626 0 1px, #777 1px 2px) no-repeat 3px 0 / 3px 14px;
`;

const Divider = styled.span`
  flex: none;
  width: 6px;
  height: 20px;
  background: linear-gradient(#333, #333) no-repeat 2px 0 / 1px 20px, linear-gradient(#8a8a8a, #8a8a8a) no-repeat 3px 0 / 1px 20px;
`;

const Joint = styled.span`
  flex: none;
  width: ${(p) => p.$w || 6}px;
  height: 22px;
  border: 1px solid #3a3a3a;
  border-width: 0 1px;
  background: #6a6a6a;
`;

const Combo = styled.label`
  display: flex;
  flex: none;
  align-items: center;
  width: ${(p) => p.$w}px;
  height: 22px;
  padding: 0 4px 0 ${(p) => p.$pad || 5}px;
  background: #cbcbcb;
  color: #6e6e6e;
  font-family: ${(p) => (p.$mono ? '"Liberation Mono", monospace' : "inherit")};
  font-size: ${(p) => (p.$mono ? 10 : 12)}px;
`;

const Swatch = styled.span`
  flex: none;
  width: 10px;
  height: 10px;
  margin-right: ${(p) => p.$gap || 4}px;
  border: 1px solid #111;
  background: #00ffff;
`;

const LineSample = styled.span`
  flex: none;
  width: ${(p) => p.$w}px;
  height: 1px;
  margin-right: 4px;
  background: #000;
`;

const LayerMarks = styled.span`
  display: flex;
  gap: 3px;
  margin-right: 2px;
`;

const ComboField = ({ w, pad, mono, label, value, children }) => (
  <Combo $w={w} $pad={pad} $mono={mono}>
    {children}
    <PlainSelect aria-label={label}>
      <option>{value}</option>
    </PlainSelect>
    <svg width="8" height="6" viewBox="0 0 8 6">
      <path d="M1 1l3 3 3-3" fill="none" stroke="#adadad" strokeWidth="1.200" />
    </svg>
  </Combo>
);

const STANDARD = [
  "new", "open", "save", "|", "print", "preview", "publish", "globe", "|",
  "cut", "copy", "paste", "match", "blockEdit", "|", "undo", "v", "redo", "v", "|",
  "hand", "zoomTime", "zoomWin", "zoomPrev", "|",
  "props", "center", "palettes", "sheets", "markup", "calc", "|", "help",
];

const STYLES = [
  { icon: "textStyle", value: "GB", pad: 19, label: "文字样式" },
  { icon: "dimStyle", value: "GB", pad: 19, label: "标注样式" },
  { icon: "tableStyle", value: "Standard", pad: 5, label: "表格样式" },
  { icon: "leaderStyle", value: "Standard", pad: 19, label: "多重引线样式" },
];

const ToolbarArea = () => (
  <Toolbars>
    <ToolbarRow>
      <Toolbar>
        <Grip />
        {STANDARD.map((n, i) => {
          if (n === "|") return <Divider key={i} />;
          if (n === "v") return <CaretButton key={i} w={13} color="#9a9a9a" />;
          return <ToolButton key={i} name={n} />;
        })}
      </Toolbar>
      <Toolbar>
        {STYLES.map((s, i) => (
          <React.Fragment key={s.label}>
            {i === 0 ? <Grip $w={9} /> : <Joint $w={5} />}
            <ToolButton name={s.icon} w={24} />
            <ComboField w={120} pad={s.pad} label={s.label} value={s.value} />
          </React.Fragment>
        ))}
      </Toolbar>
    </ToolbarRow>
    <ToolbarRow>
      <Toolbar>
        <Grip $w={9} />
        <ComboField w={175} pad={9} label="工作空间" value="AutoCAD 经典" />
        <ToolButton name="gear" />
        <ToolButton name="wsFrame" />
      </Toolbar>
      <Toolbar>
        <Grip $w={9} />
        <ToolButton name="layerProps" />
        <ComboField w={300} pad={4} label="图层" value="标注线">
          <LayerMarks>
            {["bulb", "sun", "freezeVp", "unlock"].map((n) => (
              <Icon key={n} name={n} size={14} />
            ))}
          </LayerMarks>
          <Swatch $gap={5} />
        </ComboField>
        <ToolButton name="layerCur" />
        <ToolButton name="layerPrev" />
        <ToolButton name="layerState" />
      </Toolbar>
      <Toolbar>
        <Grip $w={9} />
        <ComboField w={150} pad={6} mono label="颜色" value="ByLayer">
          <Swatch />
        </ComboField>
        <Joint />
        <ComboField w={160} mono label="线型" value="ByLayer">
          <LineSample $w={60} />
        </ComboField>
        <Joint />
        <ComboField w={125} mono label="线宽" value="ByLayer">
          <LineSample $w={35} />
        </ComboField>
        <Joint />
        <ComboField w={119} pad={10} mono label="打印样式" value="ByColor" />
      </Toolbar>
    </ToolbarRow>
  </Toolbars>
);

/* ---------- workspace ---------- */

const Workspace = styled.main`
  display: flex;
  flex: 1;
  min-height: 0;
`;

const Viewport = styled.div`
  display: grid;
  flex: 1;
  min-width: 0;
  grid-template-columns: 1fr 17px;
  grid-template-rows: 1fr 17px;
`;

const Dock = styled.aside`
  display: flex;
  flex: none;
  flex-direction: column;
  gap: 1px;
  width: ${(p) => p.$w}px;
  padding-left: ${(p) => p.$pad || 0}px;
`;

const DockBar = styled.div`
  display: flex;
  flex-direction: column;
  align-items: center;
  width: 24px;
  border: 1px solid #383838;
`;

const DockGrip = styled.span`
  width: 14px;
  height: 3px;
  margin: 3px 0 2px;
  background: repeating-linear-gradient(90deg, #262626 0 1px, #777 1px 2px);
`;

const DockRule = styled.span`
  width: 20px;
  height: 1px;
  margin: 2px 0;
  background: #eee;
`;

const DRAW_TOOLS = [
  "line", "xline", "pline", "polygon", "rect", "arc", "circle", "revcloud", "spline", "ellipse",
  "ellArc", "insert", "block", "point", "hatch", "gradient", "region", "table", "mtext", "addSel",
];
const MODIFY_TOOLS = [
  "erase", "copyObj", "mirror", "offset", "array", "move", "rotate", "scale", "stretch",
  "trim", "extend", "breakPt", "breakSeg", "join", "chamfer", "fillet", "blend", "explode",
];

const Canvas = styled.section`
  position: relative;
  overflow: hidden;
  background: #212830;
`;

const Drawing = styled.svg`
  position: absolute;
  inset: 0;
  width: 100%;
  height: 100%;
`;

const ViewLabel = styled.div`
  position: absolute;
  top: 6px;
  left: 3px;
  color: #f2f2f2;
`;

const CursorTip = styled.div`
  position: absolute;
  top: 551px;
  left: 488px;
  height: 22px;
  padding: 0 8px 0 3px;
  border: 1px solid #000;
  background: #919191;
  color: #000;
  font-size: 13px;
  line-height: 20px;
  white-space: pre;
`;

const ViewCube = styled.div`
  position: absolute;
  top: 6px;
  right: 16px;
  display: flex;
  flex-direction: column;
  align-items: center;
  width: 134px;
`;

const WcsButton = styled.button`
  display: flex;
  align-items: center;
  justify-content: space-between;
  width: 48px;
  height: 17px;
  margin-top: 13px;
  padding: 0 6px 0 4px;
  border: 1px solid #6f747d;
  border-radius: 4px;
  background: #8f939b;
  color: #3a3f47;
  font-family: "Liberation Sans", sans-serif;
  font-size: 11px;
`;

const PITCH = 271.5;
const STEPS = Array.from({ length: 60 }, (_, i) => i - 1);

// every fifth grid line is a major one
const gridPos = (start, i) => Math.round(start + (i * PITCH) / 5) + 0.5;

const GridLines = () => (
  <g strokeWidth="1">
    {STEPS.map((i) => (
      <line key={`v${i}`} x1={gridPos(33, i)} x2={gridPos(33, i)} y1="0" y2="100%" stroke={i % 5 === 0 ? "#343c46" : "#252c35"} />
    ))}
    {STEPS.map((i) => (
      <line key={`h${i}`} y1={gridPos(91, i)} y2={gridPos(91, i)} x1="0" x2="100%" stroke={i % 5 === 0 ? "#303842" : "#252c35"} />
    ))}
  </g>
);

const Model = () => (
  <Drawing>
    <GridLines />
    <g stroke="#1fa81f" fill="none">
      <path d="M0 524.500h1842" strokeDasharray="4 2" strokeWidth="1" />
      <path d="M479 524L573 428" strokeDasharray="3 3" />
      <path d="M568 427.500h11M573.500 422v11" />
      <path d="M590 518.500h12M590 530.500h12M590.500 518v13M602.500 518v13" strokeDasharray="3 3" strokeWidth="1.500" />
      <path d="M590 524.500h14M596.500 518v13" strokeWidth="1.300" />
      <path d="M592 521.500h9M592 527.500h9" strokeDasharray="3 3" />
    </g>
    <g stroke="#10cccc" strokeWidth="1.400">
      <path d="M574 427L816 176" />
      <path d="M601 524.500L1130 541.500" />
    </g>
    <g stroke="#fff" fill="none">
      <path d="M472.500 294v481M232 534.500h481" />
      <path d="M473 518l13 13M486 518l-13 13" />
      <path d="M19.500 728v50.500H70M14.500 773.500h10v10h-10z" stroke="#f0f0f0" />
    </g>
    <g fill="#f0f0f0" fontFamily="Lato, sans-serif" fontWeight="300" fontSize="20" textAnchor="middle">
      <text x="27" y="724">Y</text>
      <text x="80" y="777">X</text>
    </g>
  </Drawing>
);

const Compass = () => (
  <svg width="134" height="150" viewBox="0 -8 134 150">
    <circle cx="67" cy="67" r="53.500" fill="none" stroke="#434952" strokeWidth="13" />
    <rect x="41" y="42" width="52" height="52" fill="#a4a6a8" />
    <rect x="51" y="51" width="32" height="32" fill="#9aa3ae" />
    <g fontFamily='"Noto Sans CJK SC", sans-serif' textAnchor="middle">
      <text x="67" y="77" fontSize="27" fill="#4a4f57">上</text>
      <g fontSize="18" fill="#a9adb2">
        <text x="67" y="19">北</text>
        <text x="67" y="133">南</text>
        <text x="11" y="76">西</text>
        <text x="123" y="76">东</text>
      </g>
    </g>
  </svg>
);

const VScroll = styled.div`
  display: flex;
  flex-direction: column;
  background: #f0f0f0;
`;

const HScroll = styled.div`
  display: flex;
  background: #f0f0f0;
`;

const ScrollCorner = styled.div`
  background: #f0f0f0;
`;

const ScrollButton = styled.button`
  display: grid;
  place-items: center;
  width: 17px;
  height: 17px;

  svg {
    transform: rotate(${(p) => p.$turn || 0}deg);
  }
`;

const Thumb = styled.div`
  width: ${(p) => (p.$flat ? 17 : 15)}px;
  height: ${(p) => (p.$flat ? 15 : 17)}px;
  margin: ${(p) => (p.$flat ? "1px 0" : "0 1px")};
  background: #cdcdcd;
`;

const Spacer = styled.div`
  flex: 1;
`;

const Arrow = ({ turn, label }) => (
  <ScrollButton $turn={turn} aria-label={label}>
    <svg width="9" height="9" viewBox="0 0 9 9">
      <path d="M1 6.500l3.500-3.500L8 6.500" fill="none" stroke="#505050" strokeWidth="2" />
    </svg>
  </ScrollButton>
);

/* ---------- command line ---------- */

const CommandPanel = styled.section`
  display: grid;
  flex: none;
  grid-template-columns: 23px 1fr;
  margin: 2px 2px 0 0;
  border-top: 1px solid #808080;
  font-family: "Liberation Mono", "Noto Sans CJK SC", monospace;
  color: #000;
`;

const CommandGrip = styled.div`
  display: flex;
  flex-direction: column;
  align-items: center;
  gap: 8px;
  padding-top: 4px;
  background: linear-gradient(#808080, #3c3c3c);

  span {
    width: 17px;
    height: 5px;
    background: repeating-linear-gradient(90deg, #aaa 0 2px, transparent 2px 3px);
  }
`;

const History = styled.div`
  height: 41px;
  padding: 10px 2px 0;
  border-bottom: 1px solid #777;
  background: #c8c8c8;
  line-height: 15px;
  white-space: pre;
`;

const Prompt = styled.label`
  display: flex;
  align-items: center;
  gap: 5px;
  height: 22px;
  padding-left: 11px;
  background: #fff;

  b {
    font-size: 12px;
  }
  input {
    flex: 1;
  }
`;

const PromptText = styled.span`
  font-size: 13px;
`;

/* ---------- layout tabs and status bar ---------- */

const Bottom = styled.footer`
  display: flex;
  flex: none;
  justify-content: space-between;
  height: 30px;
  border-top: 1px solid #7b7b7b;
  background: #373737;
  color: #fff;
`;

const LayoutTabs = styled.div`
  display: flex;
  padding-left: 10px;
`;

const LayoutTab = styled.button`
  width: ${(p) => p.$w || 56}px;
  height: 18px;
  margin-right: -1px;
  color: #c0c0c0;
  background: linear-gradient(#4c4c4c, #636363);
  clip-path: polygon(0 0, 100% 0, 91% 82%, 86% 100%, 14% 100%, 9% 82%);
  font-weight: ${(p) => (p.$active ? 700 : 400)};

  ${(p) =>
    p.$active &&
    css`
      color: #fff;
      background: linear-gradient(#606060, #8a8a8a);
    `}
`;

const StatusBar = styled.div`
  display: flex;
  gap: 1px;
  height: 28px;
  margin-right: 2px;
`;

const StatusGroup = styled.div`
  display: flex;
  align-items: center;
  border: 1px solid #727272;
  background: #4b4b4b;
`;

const StatusDivider = styled.span`
  width: 1px;
  height: 26px;
  background: #727272;
`;

const StatusText = styled.button`
  width: ${(p) => p.$w}px;
  height: 24px;
  padding-left: ${(p) => p.$pad || 0}px;
  font-weight: 500;
  text-align: ${(p) => p.$align || "center"};
`;

const STATUS = [
  ["grid", "snap", "v16"],
  ["ortho", "polar", "v16", "iso", "v13", "|", "otrack", "osnap", "v13", "|", "lwt", "|", "transp", "|", "cycle", "|", "osnap3d", "v15"],
  ["ducs", "filter", "v15", "gizmo", "v16"],
];

const StatusItems = ({ items }) =>
  items.map((n, i) => {
    if (n === "|") return <StatusDivider key={i} />;
    if (/^v\d/.test(n)) return <CaretButton key={i} w={Number(n.slice(1))} size={4} />;
    return <ToolButton key={i} name={n} w={24} />;
  });

const TaskBar = styled.div`
  display: flex;
  flex: none;
  height: 8px;
  overflow: hidden;
  background: #0b0b0b;
  color: #fff;
`;

const TaskActive = styled.span`
  width: 48px;
  margin-left: 397px;
  background: #333;
`;

const Clock = styled.time`
  margin-left: auto;
  padding: 2px 70px 0 0;
`;

const TaskEdge = styled.span`
  width: 5px;
  border-left: 1px solid #666;
`;

/* ---------- floating windows ---------- */

const UploadBadge = styled.button`
  position: absolute;
  top: 28px;
  right: 107px;
  display: flex;
  align-items: center;
  width: 104px;
  height: 25px;
  overflow: hidden;
  border: 1px solid #4a8af4;
  border-radius: 4px;
  background: linear-gradient(#f2f7ff, #dce9fd);
  color: #5b92f0;
`;

const UploadIcon = styled.span`
  display: grid;
  place-items: center;
  width: 29px;
  height: 25px;
  background: #5395fc;
`;

const UploadText = styled.span`
  flex: 1;
  text-align: center;
`;

const OrbClip = styled.div`
  position: absolute;
  top: 59px;
  right: 0;
  width: 19px;
  height: 74px;
  overflow: hidden;
`;

const Orb = styled.div`
  width: 74px;
  height: 74px;
  border: 3px solid #cdb765;
  border-radius: 50%;
  background: radial-gradient(circle at 50% 45%, #8f7be8, #5a3fb8 60%, #1c1440);
  box-shadow: inset 0 0 0 2px #17131f;
`;

const ImeBar = styled.div`
  position: absolute;
  right: 352px;
  bottom: 42px;
  display: flex;
  align-items: center;
  height: 24px;
  border: 1px solid #9aa6bd;
  background: #fff;
  color: #1f6fc4;
`;

const ImeLogo = styled.svg`
  width: 28px;
  height: 28px;
  margin-right: 1px;
`;

const ImeText = styled.button`
  width: 22px;
  font-size: 14px;
  font-weight: 700;
`;

const Ime = () => (
  <ImeBar>
    <ImeLogo viewBox="0 0 28 28">
      <path d="M1 5L23 0q2 0 2 2l3 18q0 3-2 4L8 28q-3 0-3-2L0 8q0-2 1-3z" fill="#f0531c" />
      <path d="M22 7C14 4 6 7 7 11c1 4 13 2 13 6 0 4-8 5-13 2" stroke="#fff" strokeWidth="4" fill="none" />
    </ImeLogo>
    <ImeText>英</ImeText>
    {["punct", "smile", "mic", "keyboard", "person", "shirt", "apps"].map((n) => (
      <ToolButton key={n} name={n} w={22} size={n === "punct" ? 14 : 16} />
    ))}
  </ImeBar>
);

const App = () => {
  const [activeFile, setActiveFile] = useState("Drawing1*");
  const [layout, setLayout] = useState("模型");

  return (
    <Page>
      <GlobalStyle />
      <TopHeader />

      <FileTabs>
        {["开始", "Drawing1*"].map((name) => (
          <FileTab key={name} $active={name === activeFile} onClick={() => setActiveFile(name)}>
            {name}
            {name !== "开始" && (
              <svg width="8" height="8" viewBox="0 0 8 8">
                <path d="M1 1l6 6M7 1L1 7" stroke="#3b3b3b" strokeWidth="1.800" />
              </svg>
            )}
          </FileTab>
        ))}
        <AddFileTab aria-label="新图形">
          <PlusGlyph />
        </AddFileTab>
      </FileTabs>

      <ToolbarArea />

      <Workspace>
        <Dock $w={29}>
          <DockBar>
            <DockGrip />
            {DRAW_TOOLS.map((n) => (
              <ToolButton key={n} name={n} w={22} />
            ))}
          </DockBar>
        </Dock>
        <Viewport>
          <Canvas>
            <Model />
            <ViewLabel>[−][俯视][二维线框]</ViewLabel>
            <CursorTip>{"范围: < 226°,  端点: < 180°"}</CursorTip>
            <ViewCube>
              <Compass />
              <WcsButton>
                WCS
                <svg width="8" height="6"><path d="M1 1h6L4 5z" fill="none" stroke="#b5b8be" /></svg>
              </WcsButton>
            </ViewCube>
          </Canvas>
          <VScroll>
            <Arrow turn={0} label="向上" />
            <Thumb />
            <Spacer />
            <Arrow turn={180} label="向下" />
          </VScroll>
          <HScroll>
            <Arrow turn={-90} label="向左" />
            <Spacer />
            <Thumb $flat />
            <Arrow turn={90} label="向右" />
          </HScroll>
          <ScrollCorner />
        </Viewport>
        <Dock $w={32} $pad={4}>
          <DockBar>
            <DockGrip />
            {MODIFY_TOOLS.map((n) => (
              <ToolButton key={n} name={n} w={22} />
            ))}
          </DockBar>
          <DockBar>
            <DockGrip />
            {["front", "back", "above", "below"].map((n) => (
              <ToolButton key={n} name={n} w={22} />
            ))}
            <DockRule />
            <ToolButton name="annoFront" w={22} />
            <ToolButton name="hatchBack" w={22} />
          </DockBar>
        </Dock>
      </Workspace>

      <CommandPanel>
        <CommandGrip>
          <span />
          <svg width="10" height="10"><path d="M1 1l8 8M9 1L1 9" stroke="#fff" strokeWidth="2" /></svg>
          <Icon name="wrench" />
        </CommandGrip>
        <div>
          <History>{"DIMANGULAR\n选择圆弧、圆、直线或 <指定顶点>:"}</History>
          <Prompt>
            <svg width="9" height="14" viewBox="0 0 9 14">
              <path d="M1 1c5 2 6 6 6 12M1 5V1h4M5 11l2 2 2-2" fill="none" stroke="#8aa2cc" />
            </svg>
            <Caret $color="#888" />
            <b>DIMANGULAR</b>
            <PromptText>指定角的顶点:</PromptText>
            <input aria-label="命令" />
          </Prompt>
        </div>
      </CommandPanel>

      <Bottom>
        <LayoutTabs>
          {["模型", "布局1", "布局2"].map((name) => (
            <LayoutTab key={name} $w={name === "模型" ? 50 : 55} $active={name === layout} onClick={() => setLayout(name)}>
              {name}
            </LayoutTab>
          ))}
          <LayoutTab $w={28} aria-label="新建布局">
            <PlusGlyph />
          </LayoutTab>
        </LayoutTabs>
        <StatusBar>
          <StatusGroup>
            <StatusText $w={26}>模型</StatusText>
          </StatusGroup>
          {STATUS.map((items, i) => (
            <StatusGroup key={i}>
              <StatusItems items={items} />
            </StatusGroup>
          ))}
          <StatusGroup>
            <StatusItems items={["annoVis", "annoAuto", "annoScale"]} />
            <StatusText $w={18} $align="right">1:1</StatusText>
            <CaretButton w={15} size={4} />
          </StatusGroup>
          <StatusGroup>
            <StatusItems items={["gearDim", "v15", "|", "plus"]} />
          </StatusGroup>
          <StatusGroup>
            <StatusItems items={["ruler"]} />
            <StatusText $w={57} $pad={6} $align="left">小数</StatusText>
            <CaretButton w={16} size={4} />
          </StatusGroup>
          {["isolate", "perf"].map((n) => (
            <StatusGroup key={n}>
              <StatusItems items={[n]} />
            </StatusGroup>
          ))}
          <StatusGroup>
            <StatusItems items={["clean", "burger"]} />
          </StatusGroup>
        </StatusBar>
      </Bottom>

      <TaskBar>
        <TaskActive />
        <Clock>20:55</Clock>
        <TaskEdge />
      </TaskBar>

      <UploadBadge>
        <UploadIcon>
          <Icon name="cloud" size={20} />
        </UploadIcon>
        <UploadText>拖拽上传</UploadText>
      </UploadBadge>
      <OrbClip>
        <Orb />
      </OrbClip>
      <Ime />
    </Page>
  );
};

export default App;
